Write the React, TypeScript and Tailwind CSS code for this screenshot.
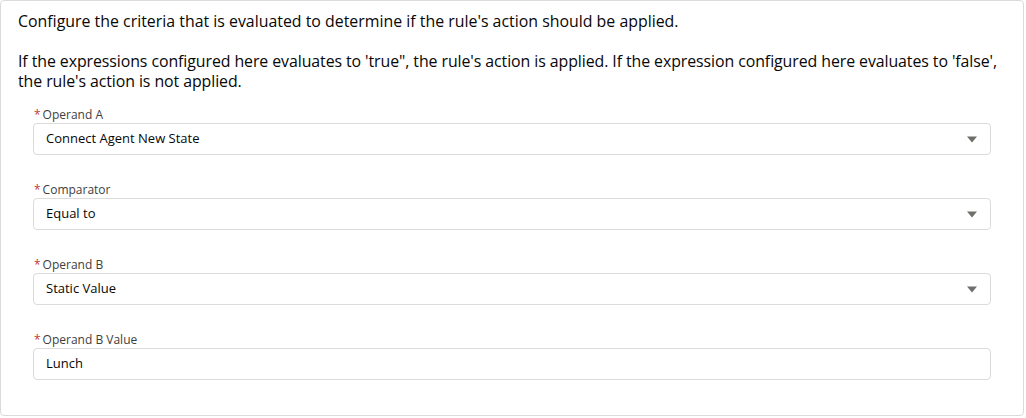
const FIELDS = [
  { label: "Operand A", value: "Connect Agent New State", select: true },
  { label: "Comparator", value: "Equal to", select: true },
  { label: "Operand B", value: "Static Value", select: true },
  { label: "Operand B Value", value: "Lunch", select: false },
];

const Field = ({ label, value, select }: { label: string; value: string; select: boolean }) => (
  <div className="flex flex-col">
    <label className="flex items-center h-[21px] pt-[5px] text-[12px] text-[#3e3e3c] leading-none pl-[1px]">
      <span className="text-[#c23934] mr-[2px] text-[12px]">*</span>
      {label}
    </label>
    <div className="h-[32px] flex items-center justify-between border border-[#dddbda] rounded-[4px] bg-white pl-[12px] pr-[13px] text-[13px] text-[#080707]">
      <span>{value}</span>
      {select && (
        <svg width="10" height="7" viewBox="0 0 10 7" className="mt-[1px]">
          <path d="M0 0.5 L10 0.5 L5 6.5 Z" fill="#706e6b" />
        </svg>
      )}
    </div>
  </div>
);

export default function App() {
  return (
    <div className="w-[1026px] h-[418px] bg-white" style={{ fontFamily: '"Open Sans", "Noto Sans", sans-serif' }}>
      <div className="w-[1024px] h-[416px] border border-[#dddbda] rounded-[4px] bg-white pl-[17px] pr-[10px] pt-[10px]">
        <p className="text-[15.9px] leading-[20px] text-[#080707]">
          Configure the criteria that is evaluated to determine if the rule's action should be applied.
        </p>
        <p className="mt-[20px] text-[15.9px] leading-[20px] text-[#080707] tracking-[-0.08px]">
          If the expressions configured here evaluates to 'true", the rule's action is applied. If the expression configured here evaluates to 'false', the rule's action is not applied.
        </p>
        <div className="mt-[11px] ml-[15px] mr-[22px] flex flex-col gap-[22px]">
          {FIELDS.map((f) => (
            <Field key={f.label} {...f} />
          ))}
        </div>
      </div>
    </div>
  );
}
